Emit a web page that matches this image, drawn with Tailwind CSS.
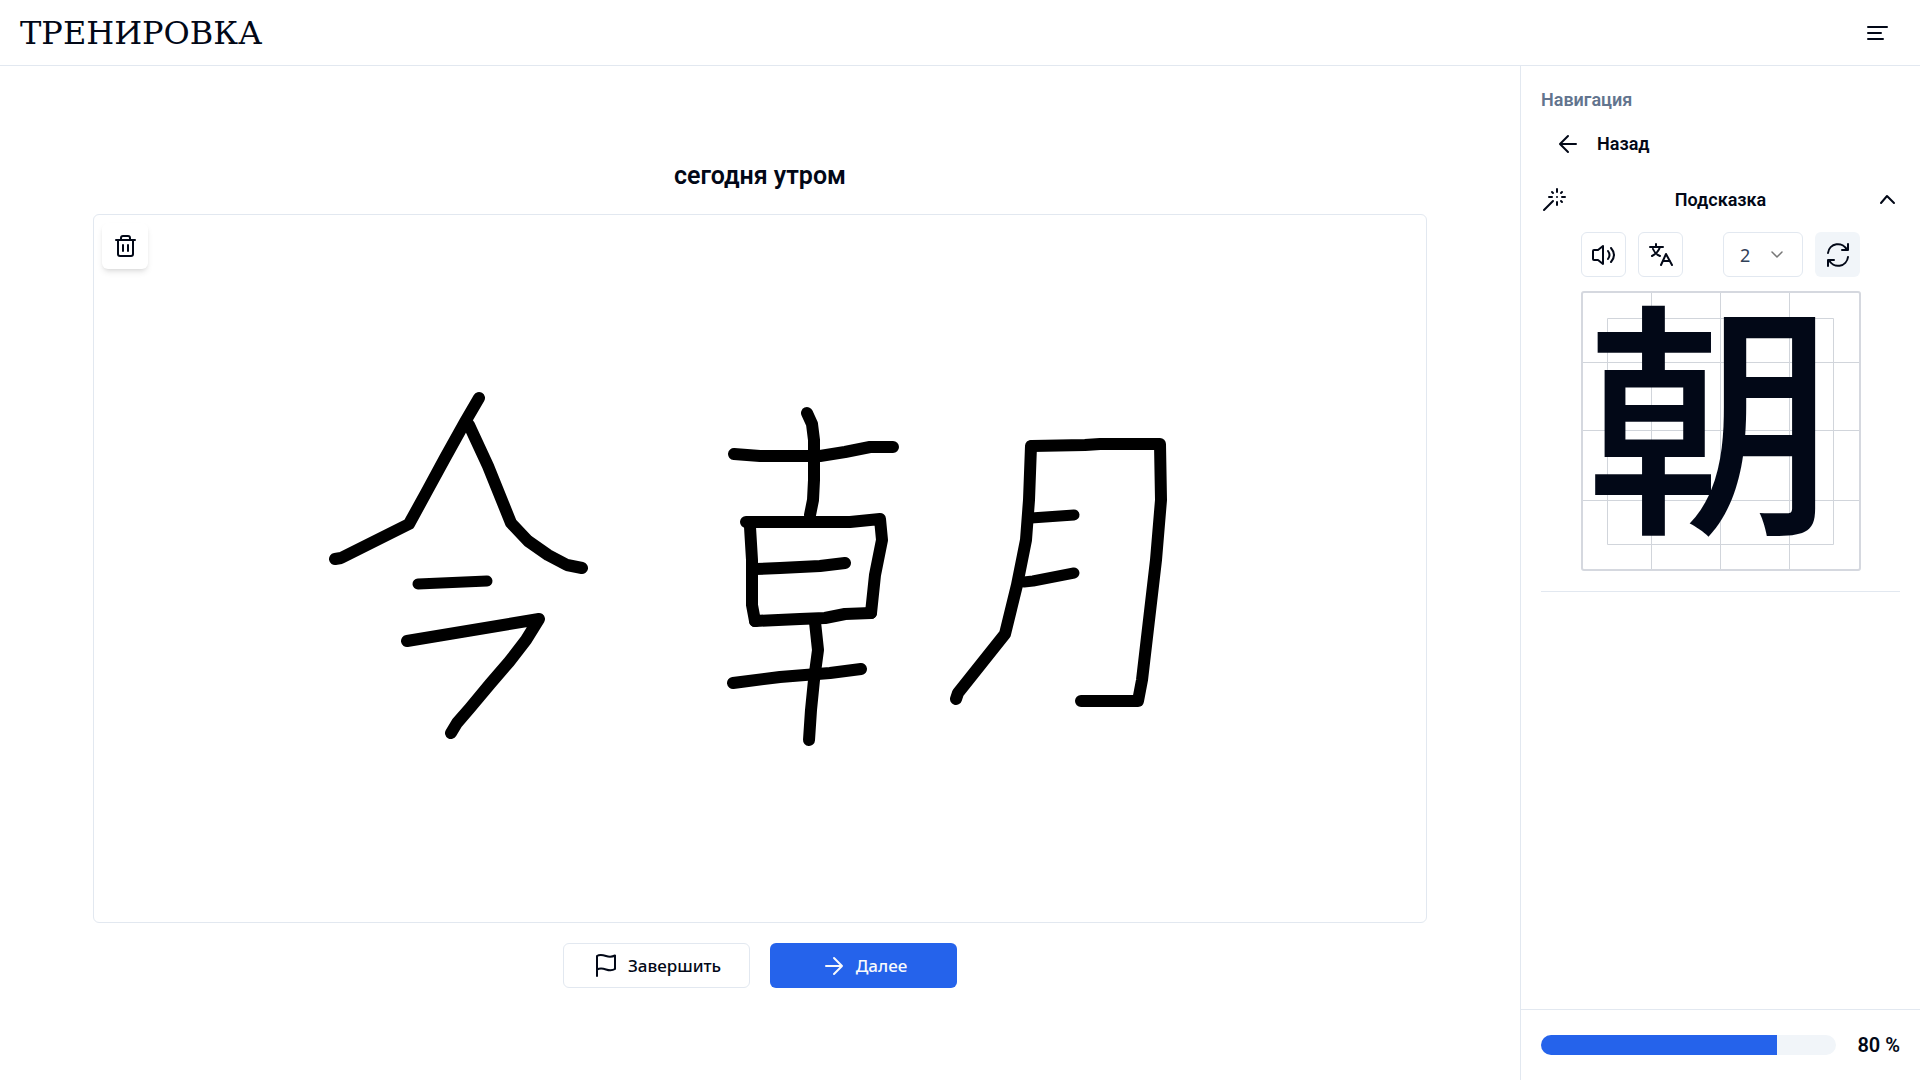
<!DOCTYPE html>
<html lang="ru">
<head>
<meta charset="utf-8">
<meta name="viewport" content="width=device-width, initial-scale=1">
<title>Тренировка</title>
<script src="https://cdn.jsdelivr.net/npm/@tailwindcss/browser@4"></script>
</head>
<body class="flex min-h-screen flex-col bg-white font-['Roboto',sans-serif] text-[#020817]">
  <header class="flex h-[66px] items-center justify-between border-b border-slate-200 px-5">
    <a href="#" class="font-['DejaVu_Serif',serif] text-[32px] leading-8">ТРЕНИРОВКА</a>
    <button type="button" aria-label="Меню" class="mr-2 flex size-8 items-center justify-center">
      <svg class="size-8" viewBox="0 0 32 32" fill="none" stroke="currentColor" stroke-width="2" stroke-linecap="round"><path d="M8 10h19M8 16h13M8 22h15"/></svg>
    </button>
  </header>

  <div class="flex flex-1">
    <main class="flex flex-1 flex-col items-center justify-center px-[93px]">
      <h1 class="mb-5 text-[25px] leading-9 font-semibold">сегодня утром</h1>
      <div class="relative aspect-[1334/709] w-full rounded-md border border-slate-200">
        <button type="button" aria-label="Очистить" class="absolute top-2 left-2 flex size-[46px] items-center justify-center rounded-md bg-white shadow-md">
          <svg class="size-7" viewBox="0 0 28 28" fill="none" stroke="currentColor" stroke-width="2" stroke-linecap="round" stroke-linejoin="round"><path d="M5 8h19M7 8v14q0 2 2 2h11q2 0 2-2V8M10 8V6q0-2 2-2h5q2 0 2 2v2M12 13v6M17 13v6"/></svg>
        </button>
        <!-- Ink strokes drawn by the user -->
        <svg class="block size-full" viewBox="94 215 1332 707" fill="none" stroke="#000" stroke-width="12" stroke-linecap="round" stroke-linejoin="round" role="img" aria-label="Рисунок">
          <path d="M479 398 465 422 445 458 426 493 409 524 341 558 335 559"/>
          <path d="M469 425 488 466 511 523 528 541 548 555 567 565 582 568"/>
          <path d="M418 584 487 581" stroke-width="11"/>
          <path d="M407 641 539 619 526 640 509 662 490 684 470 708 457 723 451 733"/>
          <path d="M807 413 812 424 814 440 814 480 813 500 810 515"/>
          <path d="M734 454 760 456 820 456 845 452 870 447 893 447"/>
          <path d="M746 522 850 522 880 519 882 540 875 575 871 613"/>
          <path d="M750 527 752 560 752 605 755 621"/>
          <path d="M755 569 780 568 820 566 845 563"/>
          <path d="M755 621 800 619 825 618 845 614 871 613"/>
          <path d="M815 622 818 650 814 680 811 710 809 740"/>
          <path d="M733 683 780 677 830 673 861 669"/>
          <path d="M1031 446 1029 500 1026 540 1017 585 1005 634 958 693 956 699"/>
          <path d="M1032 446 1085 445 1100 444 1160 444 1161 500 1156 560 1149 620 1142 680 1138 701 1081 701"/>
          <path d="M1031 518 1074 515M1024 582 1033 581 1074 573" stroke-width="11"/>
        </svg>
      </div>
      <div class="mt-5 flex gap-5 font-['Noto_Sans',sans-serif] text-[17px] font-medium">
        <button type="button" class="flex h-[45px] w-[187px] items-center justify-center gap-2 rounded-md border border-slate-200">
          <svg class="size-7" viewBox="0 0 28 28" fill="none" stroke="currentColor" stroke-width="2" stroke-linecap="round" stroke-linejoin="round"><path d="M5 24V4c3-2 6-1 9 0s6 1 9-.5V17c-3 2-6 1.500-9 .5s-6-1.500-9 0"/></svg>
          Завершить
        </button>
        <button type="button" class="flex h-[45px] w-[187px] items-center justify-center gap-2 rounded-md bg-[#2563eb] text-slate-50">
          <svg class="size-7" viewBox="0 0 28 28" fill="none" stroke="currentColor" stroke-width="2" stroke-linecap="round" stroke-linejoin="round"><path d="M6 14h16M14 6l8 8-8 8"/></svg>
          Далее
        </button>
      </div>
    </main>

    <aside class="flex w-[400px] flex-col border-l border-slate-200">
      <div class="flex-1 px-5 pt-5">
        <h2 class="text-lg leading-7 font-semibold text-slate-500">Навигация</h2>
        <a href="#" class="mt-2.5 flex h-10 items-center gap-4 px-3 text-lg font-semibold">
          <svg class="size-7" viewBox="0 0 28 28" fill="none" stroke="currentColor" stroke-width="2" stroke-linecap="round" stroke-linejoin="round"><path d="M23 14H8M15 6l-8 8 8 8"/></svg>
          Назад
        </a>
        <button type="button" aria-expanded="true" class="mt-3 flex h-12 w-full items-center justify-between text-lg font-semibold">
          <svg class="size-7" viewBox="0 0 28 28" fill="none" stroke="currentColor" stroke-width="2" stroke-linecap="round" stroke-linejoin="round"><path d="M3 24 12 15M16 3v3M16 16v3M8 11h3M21 11h3M11 6l1 1M20 15l1 1M21 6l-1 1M16 11h.01"/></svg>
          Подсказка
          <svg class="size-7" viewBox="0 0 28 28" fill="none" stroke="currentColor" stroke-width="2" stroke-linecap="round" stroke-linejoin="round"><path d="M9 17l6-7 7 7"/></svg>
        </button>
        <div class="mx-10 mt-2 flex h-[45px] items-stretch">
          <button type="button" aria-label="Озвучить" class="flex w-[45px] items-center justify-center rounded-md border border-slate-200">
            <svg class="size-7" viewBox="0 0 28 28" fill="none" stroke="currentColor" stroke-width="2" stroke-linecap="round" stroke-linejoin="round"><path d="M13 5l-5 4H4q-1 0-1 1v8q0 1 1 1h4l5 4zM18 10q3 4 0 8M21 7q6 7 0 14"/></svg>
          </button>
          <button type="button" aria-label="Перевод" class="ml-3 flex w-[45px] items-center justify-center rounded-md border border-slate-200">
            <svg class="size-7" viewBox="0 0 28 28" fill="none" stroke="currentColor" stroke-width="2" stroke-linecap="round" stroke-linejoin="round"><path d="M3 6h13M9 3v3M13 6q-2 6-8 9M6 8q2 5 7 7M14 24l5-11 6 11M16 20h7"/></svg>
          </button>
          <div class="relative ml-auto w-20">
            <select aria-label="Иероглиф" class="h-full w-full appearance-none rounded-md border border-slate-200 bg-white pl-4 font-['Noto_Sans',sans-serif] text-lg text-slate-700"><option>1</option><option selected>2</option></select>
            <svg class="pointer-events-none absolute top-3 right-4 size-5" viewBox="0 0 20 20" fill="none" stroke="#777" stroke-width="1.500" stroke-linecap="round" stroke-linejoin="round"><path d="M5 8l5 5 5-5"/></svg>
          </div>
          <button type="button" aria-label="Повторить" class="ml-3 flex w-[45px] items-center justify-center rounded-md bg-slate-100">
            <svg class="size-7" viewBox="0 0 28 28" fill="none" stroke="currentColor" stroke-width="2" stroke-linecap="round" stroke-linejoin="round"><path d="M4 12a10 10 0 0 1 19-3M24 3v6h-6M24 16a10 10 0 0 1-19 3M4 25v-6h6"/></svg>
          </button>
        </div>
        <!-- Practice grid with the current character -->
        <svg class="mx-10 mt-3.5 block size-[280px] overflow-visible" viewBox="0 0 280 280">
          <g fill="none" stroke="#d1d5db"><path d="M70.500 1v278M139.500 1v278M208.500 1v278M1 71.500h278M1 139.500h278M1 209.500h278M26.500 27.500h226v226h-226z"/><rect x="1" y="1" width="278" height="278" rx="2" stroke="#d5d8df" stroke-width="2"/></g>
          <text x="129" y="224" text-anchor="middle" class="fill-[#020817] font-['Noto_Sans_CJK_SC',sans-serif] text-[248px] font-medium">朝</text>
        </svg>
        <hr class="mt-5 border-slate-200">
      </div>
      <div class="flex h-[71px] items-center justify-between border-t border-slate-200 px-5">
        <div role="progressbar" aria-label="Прогресс" aria-valuenow="80" aria-valuemin="0" aria-valuemax="100" class="h-5 w-[295px] overflow-hidden rounded-full bg-slate-100"><div class="h-full bg-[#2563eb]" style="width:80%"></div></div>
        <span class="text-xl font-semibold">80 %</span>
      </div>
    </aside>
  </div>
</body>
</html>
